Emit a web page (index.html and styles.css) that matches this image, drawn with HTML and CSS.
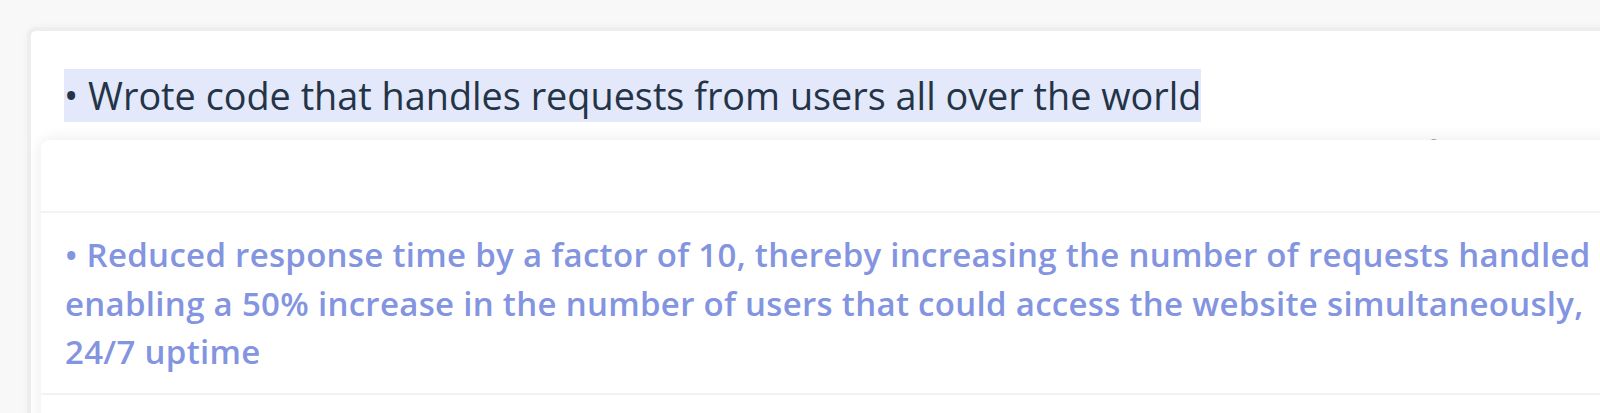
FILE: index.html
```html
<!DOCTYPE html>
<html lang="en">
<head>
<meta charset="utf-8">
<title>Resume bullet suggestions</title>
<link rel="stylesheet" href="styles.css">
</head>
<body>
  <div class="page">
    <div class="card">
      <p class="line"><span class="selected">• Wrote code that handles requests from users all over the world</span></p>
      <p class="line line-next">• Collaborated with the backend team to build tools that helped scale the platform</p>

      <div class="dropdown">
        <div class="dropdown-header"></div>
        <div class="option">
          <span class="option-line">• Reduced response time by a factor of 10, thereby increasing the number of requests handled</span>
          <span class="option-line">enabling a 50% increase in the number of users that could access the website simultaneously,</span>
          <span class="option-line">24/7 uptime</span>
        </div>
        <div class="option option-empty"></div>
      </div>
    </div>
  </div>
</body>
</html>
```

FILE: styles.css
```css
html, body {
  margin: 0;
  padding: 0;
  height: 413px;
  overflow: hidden;
  background: #f8f8f8;
}

body {
  font-family: "Open Sans", "Noto Sans", "Liberation Sans", sans-serif;
}

.page {
  padding: 27px 0 0 27px;
}

.card {
  position: relative;
  width: 1640px;
  height: 460px;
  background: #ffffff;
  border: 4px solid #eeeeee;
  border-radius: 9px;
  padding: 37px 0 0 33px;
  box-shadow: 0 0 10px rgba(0, 0, 0, 0.03);
}

.line {
  margin: 0;
  font-size: 37.8px;
  line-height: 56px;
  color: #243447;
  white-space: nowrap;
}

.line-next {
  margin-top: 3px;
}

.selected {
  background: #e3e8fb;
  padding: 1px 0;
}

.dropdown {
  position: absolute;
  left: 10px;
  top: 109px;
  width: 1700px;
  background: #ffffff;
  border-radius: 9px;
  box-shadow: 0 0 16px rgba(0, 0, 0, 0.09);
}

.dropdown-header {
  height: 71px;
  border-bottom: 2px solid #f3f3f3;
}

.option {
  display: flex;
  flex-direction: column;
  padding: 18px 0 16px 24px;
  border-bottom: 2px solid #f2f2f2;
}

.option-line {
  font-size: 33px;
  font-weight: 600;
  letter-spacing: 0.3px;
  line-height: 48.5px;
  color: #8394e0;
  white-space: nowrap;
}

.option-empty {
  height: 60px;
  padding: 0;
}
```
